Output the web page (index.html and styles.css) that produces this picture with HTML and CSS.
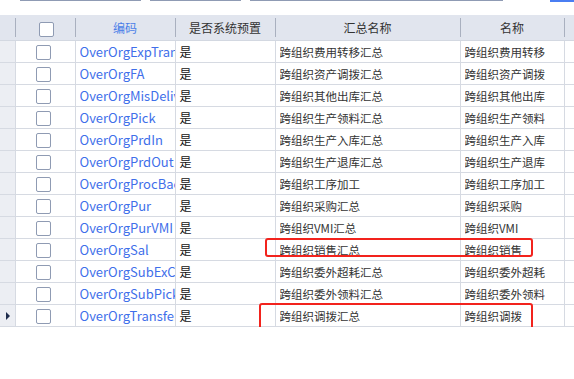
FILE: index.html
```html
<!DOCTYPE html>
<html lang="en">

<head>
    <meta charset="utf-8">
    <title>跨组织汇总</title>
    <link rel="stylesheet" href="styles.css">
</head>

<body>
<div class="top-strip">
    <span class="field-edge edge-a"></span>
    <span class="field-edge edge-b"></span>
    <span class="field-edge edge-c"></span>
    <span class="field-edge edge-btn"></span>
</div>

<div class="grid-wrap">
    <table class="grid">
        <colgroup>
            <col class="c-ind">
            <col class="c-chk">
            <col class="c-code">
            <col class="c-sys">
            <col class="c-sum">
            <col class="c-name">
            <col class="c-fill">
        </colgroup>
        <thead>
        <tr>
            <th></th>
            <th><span class="chk"></span></th>
            <th class="link-head">编码</th>
            <th>是否系统预置</th>
            <th>汇总名称</th>
            <th>名称</th>
            <th></th>
        </tr>
        </thead>
        <tbody id="rows"></tbody>
    </table>

    <div class="mark mark-sal"></div>
    <div class="mark mark-transfer"></div>
</div>

<script>
    const data = [
        ['OverOrgExpTransfer', '跨组织费用转移汇总', '跨组织费用转移'],
        ['OverOrgFA', '跨组织资产调拨汇总', '跨组织资产调拨'],
        ['OverOrgMisDelivery', '跨组织其他出库汇总', '跨组织其他出库'],
        ['OverOrgPick', '跨组织生产领料汇总', '跨组织生产领料'],
        ['OverOrgPrdIn', '跨组织生产入库汇总', '跨组织生产入库'],
        ['OverOrgPrdOut', '跨组织生产退库汇总', '跨组织生产退库'],
        ['OverOrgProcBack', '跨组织工序加工', '跨组织工序加工'],
        ['OverOrgPur', '跨组织采购汇总', '跨组织采购'],
        ['OverOrgPurVMI', '跨组织VMI汇总', '跨组织VMI'],
        ['OverOrgSal', '跨组织销售汇总', '跨组织销售'],
        ['OverOrgSubExConsume', '跨组织委外超耗汇总', '跨组织委外超耗'],
        ['OverOrgSubPick', '跨组织委外领料汇总', '跨组织委外领料'],
        ['OverOrgTransfer', '跨组织调拨汇总', '跨组织调拨']
    ];

    const tbody = document.getElementById('rows');
    data.forEach((row, i) => {
        const tr = document.createElement('tr');
        const current = i === data.length - 1 ? '<span class="cur"></span>' : '';
        tr.innerHTML = `
            <td class="ind">${current}</td>
            <td class="center"><span class="chk"></span></td>
            <td class="code"><div class="clip">${row[0]}</div></td>
            <td class="sys">是</td>
            <td class="cn"><div class="clip">${row[1]}</div></td>
            <td class="cn"><div class="clip">${row[2]}</div></td>
            <td></td>`;
        tbody.appendChild(tr);
    });
</script>
</body>

</html>
```

FILE: styles.css
```css
html, body {
    margin: 0;
    background: #fff;
    font-family: "Noto Sans CJK SC", "Noto Sans", sans-serif;
    color: #222;
}

.top-strip {
    height: 15px;
    position: relative;
    display: flex;
    align-items: flex-start;
}

.field-edge {
    display: block;
    height: 1px;
    background-color: #8f9bb4;
}

.edge-a {
    margin-left: 20px;
    width: 121px;
}

.edge-b {
    margin-left: 9px;
    width: 91px;
}

.edge-c {
    margin-left: 9px;
    width: 253px;
}

.edge-btn {
    margin-left: 47px;
    width: 24px;
    height: 2px;
    background-color: #4a7ef2;
}

.grid-wrap {
    position: relative;
}

.grid {
    border-collapse: collapse;
    table-layout: fixed;
    width: 574px;
}

.c-ind { width: 15px; }
.c-chk { width: 60px; }
.c-code { width: 100px; }
.c-sys { width: 100px; }
.c-sum { width: 185px; }
.c-name { width: 104px; }
.c-fill { width: 10px; }

.grid th {
    height: 25px;
    padding: 0;
    background-color: #e1e5ee;
    border-bottom: 1px solid #d3d8e1;
    font-size: 12px;
    font-weight: normal;
    color: #333;
    text-align: center;
    background-image: linear-gradient(#a9b0bf, #a9b0bf);
    background-size: 1px 19px;
    background-position: left center;
    background-repeat: no-repeat;
}

.grid th:first-child {
    background-image: none;
}

.grid th.link-head {
    color: #4a7ee8;
}

.grid td {
    height: 21px;
    padding: 0 0 0 4px;
    border: 1px solid #d6dae2;
    border-top: none;
    font-size: 11.5px;
    color: #333;
    white-space: nowrap;
    overflow: hidden;
}

.grid td.ind {
    padding: 0;
    background-color: #eceef3;
    border-left: none;
    position: relative;
}

.grid td.center {
    padding: 0;
    text-align: center;
}

.grid td.code {
    font-size: 13px;
    color: #3f6fea;
}

.grid td.sys {
    font-size: 12px;
    color: #111;
}

.grid td:last-child {
    border-right: none;
}

.clip {
    overflow: hidden;
    white-space: nowrap;
}

.chk {
    display: inline-block;
    width: 13px;
    height: 13px;
    border: 1px solid #8f9bb3;
    border-radius: 2px;
    background: #fff;
    vertical-align: middle;
}

.grid th .chk {
    margin-left: 2px;
}

.grid td.center .chk {
    margin-left: -3px;
}

.cur {
    position: absolute;
    left: 6px;
    top: 7px;
    width: 0;
    height: 0;
    border-top: 4px solid transparent;
    border-bottom: 4px solid transparent;
    border-left: 4px solid #1e2c4c;
}

.mark {
    position: absolute;
    border: 2px solid #f2231d;
    border-radius: 3px;
}

.mark-sal {
    left: 265px;
    top: 223px;
    width: 264px;
    height: 15px;
}

.mark-transfer {
    left: 259px;
    top: 288px;
    width: 270px;
    height: 23px;
}
```
